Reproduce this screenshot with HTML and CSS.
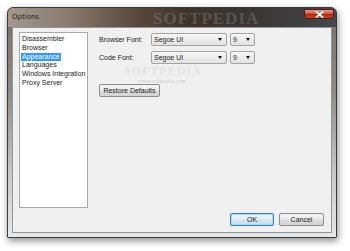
FILE: index.html
```html
<!DOCTYPE html>
<html>
<head>
<meta charset="utf-8">
<link rel="stylesheet" href="styles.css">
</head>
<body>
<div class="window">
  <div class="titlebar">
    <span class="title">Options</span>
    <span class="wm-title">SOFTPEDIA</span>
    <span class="close"><svg width="9" height="7" viewBox="0 0 9 7"><path d="M1.5 1 L7.5 6 M7.5 1 L1.5 6" stroke="#fff" stroke-width="1.8" stroke-linecap="square"/></svg></span>
  </div>
  <div class="frame">
    <div class="client">
      <div class="main">
        <div class="list">
          <div class="item"><span>Disassembler</span></div>
          <div class="item"><span>Browser</span></div>
          <div class="item selected"><span>Appearance</span></div>
          <div class="item"><span>Languages</span></div>
          <div class="item"><span>Windows Integration</span></div>
          <div class="item"><span>Proxy Server</span></div>
        </div>
        <div class="panel">
          <div class="row">
            <span class="label">Browser Font:</span>
            <span class="combo font"><span class="ctext">Segoe UI</span><span class="arrow"></span></span>
            <span class="combo size"><span class="ctext">9</span><span class="arrow"></span></span>
          </div>
          <div class="row">
            <span class="label">Code Font:</span>
            <span class="combo font"><span class="ctext">Segoe UI</span><span class="arrow"></span></span>
            <span class="combo size"><span class="ctext">9</span><span class="arrow"></span></span>
          </div>
          <div class="restore-row">
            <span class="btn restore">Restore Defaults</span>
          </div>
          <span class="wm-big">SOFTPEDIA</span>
          <span class="wm-url">www.softpedia.com</span>
        </div>
      </div>
      <div class="buttons">
        <span class="btn ok">OK</span>
        <span class="btn cancel">Cancel</span>
      </div>
    </div>
  </div>
</div>
</body>
</html>
```

FILE: styles.css
```css
html, body {
  margin: 0;
  padding: 0;
}
body {
  width: 350px;
  height: 251px;
  background: #ffffff;
  overflow: hidden;
  font-family: "Liberation Sans", Arial, sans-serif;
  font-size: 7px;
  color: #222222;
}
.window {
  box-sizing: border-box;
  margin: 7px 0 0 7px;
  width: 330px;
  height: 231px;
  border: 1px solid #3b3b3b;
  border-radius: 6px 6px 1px 1px;
  background: linear-gradient(to bottom, #7a6e66 0%, #8e8882 35%, #c9ccce 75%, #e4e8ea 100%);
  box-shadow: 1px 3px 7px rgba(0, 0, 0, 0.45);
  display: flex;
  flex-direction: column;
  overflow: hidden;
}
.titlebar {
  position: relative;
  height: 19px;
  flex: none;
  display: flex;
  align-items: flex-start;
  justify-content: space-between;
  padding: 0 2px 0 4px;
  background: linear-gradient(to right, #a3978e 0%, #8a7b70 18%, #5b4a3d 38%, #3f332a 55%, #3a3633 75%, #46474a 100%);
  border-radius: 5px 5px 0 0;
}
.title {
  margin-top: 5px;
  font-family: "DejaVu Sans", sans-serif;
  font-size: 7px;
  color: #2a221c;
}
.wm-title {
  position: absolute;
  left: 145px;
  top: 1px;
  font-family: "Liberation Serif", serif;
  font-weight: bold;
  font-size: 17px;
  letter-spacing: 1px;
  color: rgba(170, 170, 170, 0.28);
}
.close {
  margin-top: 1px;
  width: 30px;
  height: 10px;
  box-sizing: border-box;
  border: 1px solid #4a1c14;
  border-radius: 0 0 3px 3px;
  background: linear-gradient(to bottom, #e49a8c 0%, #d4604c 40%, #b22a14 55%, #c8432a 100%);
  display: flex;
  align-items: center;
  justify-content: center;
}
.close svg { display: block; }
.frame {
  flex: 1;
  padding: 0 4px 4px 4px;
  display: flex;
}
.client {
  flex: 1;
  box-sizing: border-box;
  background: #f0f0f0;
  border: 1px solid #8f969c;
  padding: 4px 7px 6px 6px;
  display: flex;
  flex-direction: column;
  gap: 5px;
}
.main {
  flex: 1;
  display: flex;
  gap: 10px;
}
.list {
  box-sizing: border-box;
  width: 69px;
  height: 176px;
  background: #ffffff;
  border: 1px solid #a9a9a9;
  padding: 2px 0 0 1px;
}
.item {
  height: 8.8px;
  line-height: 8.8px;
  white-space: nowrap;
}
.item span {
  display: inline-block;
  padding: 0 1px;
  height: 8.8px;
}
.item.selected span {
  background: #3399ff;
  color: #ffffff;
}
.panel {
  position: relative;
  flex: 1;
  padding-top: 1px;
  display: flex;
  flex-direction: column;
  gap: 5px;
}
.row {
  display: flex;
  align-items: center;
  height: 13px;
}
.label {
  width: 53px;
  padding-left: 1px;
  box-sizing: border-box;
}
.combo {
  box-sizing: border-box;
  height: 13px;
  border: 1px solid #a3a3a3;
  border-radius: 2px;
  background: linear-gradient(to bottom, #f7f7f7 0%, #ececec 50%, #e2e2e2 100%);
  display: flex;
  align-items: center;
  justify-content: space-between;
  padding: 0 4px 0 2px;
}
.combo.font { width: 76px; margin-right: 3px; }
.combo.size { width: 25px; }
.ctext { color: #222; }
.arrow {
  width: 0;
  height: 0;
  border-left: 2.5px solid transparent;
  border-right: 2.5px solid transparent;
  border-top: 3px solid #111;
}
.restore-row {
  margin-top: 15px;
  display: flex;
}
.btn {
  box-sizing: border-box;
  height: 13px;
  border: 1px solid #8c8c8c;
  border-radius: 2px;
  background: linear-gradient(to bottom, #f4f4f4 0%, #ececec 48%, #dedede 52%, #d3d3d3 100%);
  display: flex;
  align-items: center;
  justify-content: center;
  color: #1a1a1a;
}
.restore { width: 61px; margin-left: 1px; }
.buttons {
  height: 13px;
  flex: none;
  display: flex;
  justify-content: flex-end;
  gap: 5px;
}
.ok {
  width: 44px;
  border-color: #3c7fb1;
  box-shadow: inset 0 0 0 1px #a6d7f5;
  background: linear-gradient(to bottom, #eef6fb 0%, #e3eff7 48%, #d2e6f2 52%, #c6dded 100%);
}
.cancel { width: 45px; }
.wm-big {
  position: absolute;
  left: 26px;
  top: 33px;
  line-height: 12px;
  font-family: "Liberation Serif", serif;
  font-weight: bold;
  font-size: 12px;
  letter-spacing: 1px;
  color: rgba(200, 200, 200, 0.35);
}
.wm-url {
  position: absolute;
  left: 40px;
  top: 46px;
  line-height: 6px;
  font-family: "Liberation Serif", serif;
  font-size: 6px;
  color: rgba(170, 170, 170, 0.5);
}
```
